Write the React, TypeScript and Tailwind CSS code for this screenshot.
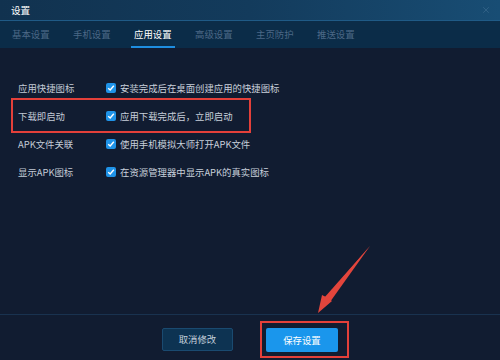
import { X } from "lucide-react";

const tabs = ["基本设置", "手机设置", "应用设置", "高级设置", "主页防护", "推送设置"];

const rows = [
  { label: "应用快捷图标", text: "安装完成后在桌面创建应用的快捷图标" },
  { label: "下载即启动", text: "应用下载完成后，立即启动" },
  { label: "APK文件关联", text: "使用手机模拟大师打开APK文件" },
  { label: "显示APK图标", text: "在资源管理器中显示APK的真实图标" },
];

const font = { fontFamily: '"Noto Sans CJK SC", "Liberation Sans", sans-serif' };

function CheckBox() {
  return (
    <span className="w-[10px] h-[10px] rounded-[2px] bg-[#1f93e8] flex items-center justify-center">
      <svg width="8" height="8" viewBox="0 0 8 8">
        <path d="M1.2 4.2 L3.2 6 L6.8 1.8" fill="none" stroke="#fff" strokeWidth="1.4" />
      </svg>
    </span>
  );
}

export default function App() {
  return (
    <div
      className="relative w-[500px] h-[360px] overflow-hidden bg-[#111c31] flex flex-col text-[9.4px]"
      style={font}
    >
      {/* Title bar */}
      <div className="h-[20px] flex items-center justify-between pl-[11px] pr-[9px] bg-gradient-to-r from-[#11324f] via-[#133b5c] to-[#184d74]">
        <span className="text-white text-[9.6px]">设置</span>
        <X className="w-[10px] h-[10px] text-[#3f6d90]" strokeWidth={1.5} />
      </div>
      <div className="h-[1px] bg-[#1f5a86]" />

      {/* Tabs */}
      <div className="h-[27px] bg-[#0b2c48] flex pl-[12px]">
        {tabs.map((t) => {
          const active = t === "应用设置";
          return (
            <div key={t} className="w-[61px] relative flex items-center">
              <span className={active ? "text-white" : "text-[#4b6886]"}>{t}</span>
              {active && (
                <span className="absolute left-[-3px] w-[44px] bottom-0 h-[2px] bg-[#1e8ee0]" />
              )}
            </div>
          );
        })}
      </div>

      {/* Content */}
      <div className="flex-1 pt-[26px] flex flex-col">
        {rows.map((r) => (
          <div key={r.label} className="h-[28px] flex items-center">
            <span className="w-[106px] shrink-0 pl-[18px] text-[#c3cbd6]">{r.label}</span>
            <CheckBox />
            <span className="ml-[4px] text-[#c8d0db]">{r.text}</span>
          </div>
        ))}
      </div>

      {/* Footer */}
      <div className="h-[1px] bg-[#19324f]" />
      <div className="h-[45px] flex justify-center gap-[33px] pt-[13px]">
        <button className="w-[71px] h-[23px] bg-[#0d3352] border border-[#1a4a70] rounded-[2px] text-[#c4cfdb]">
          取消修改
        </button>
        <button className="w-[72px] h-[24px] bg-[#1a96ec] rounded-[2px] text-white">
          保存设置
        </button>
      </div>

      {/* Annotations */}
      <div className="absolute left-[11px] top-[98px] w-[240px] h-[35px] border-2 border-[#e3403a]" />
      <div className="absolute left-[260px] top-[321px] w-[89px] h-[37px] border-2 border-[#e3403a]" />
      <svg className="absolute left-0 top-0" width="500" height="360" viewBox="0 0 500 360">
        <path d="M370 246 L326 297 L332 301 L318 313 L322 295 L328 298 Z" fill="#e3453c" />
        <path d="M370 246 L324 298 L330 302 Z" fill="#e3453c" />
      </svg>
    </div>
  );
}
